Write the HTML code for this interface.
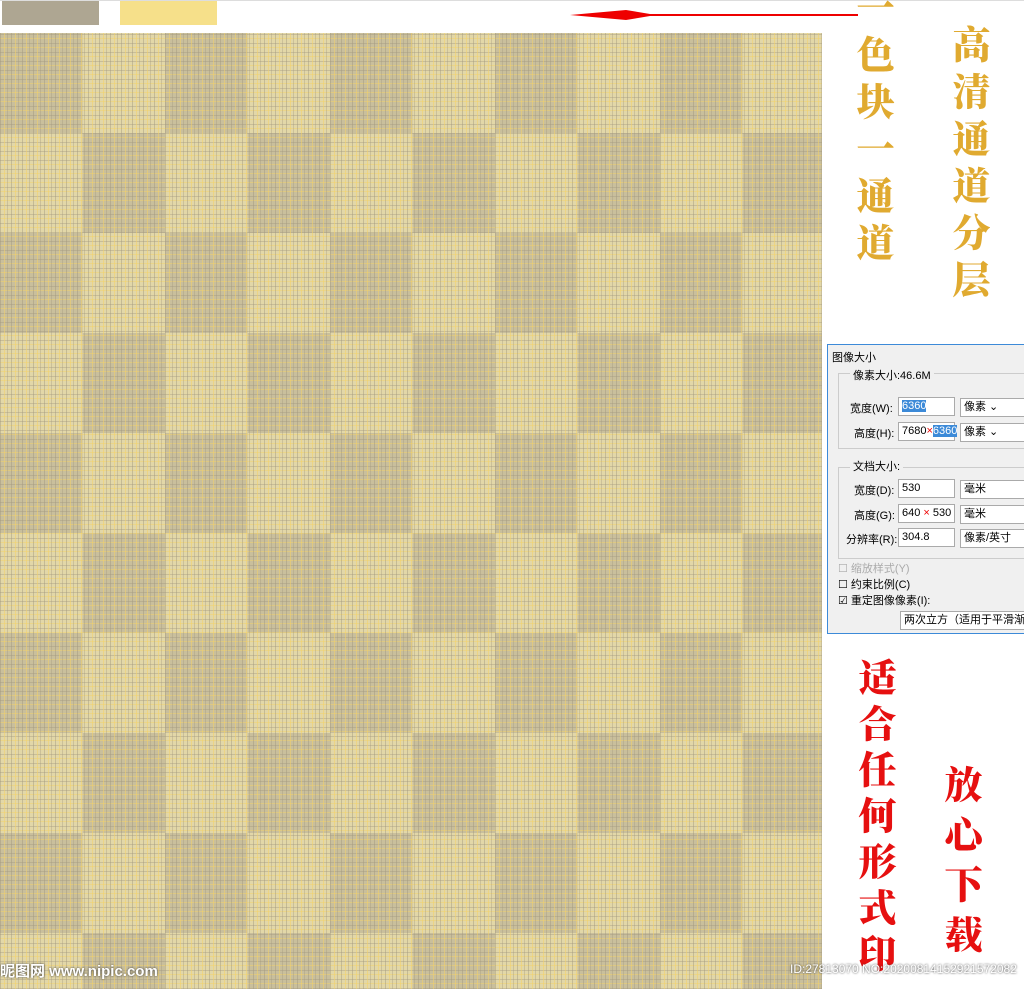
<!DOCTYPE html>
<html><head><meta charset="utf-8"><style>
body{margin:0;width:1024px;height:989px;position:relative;overflow:hidden;background:#fff;font-family:"Liberation Sans","Noto Sans CJK SC",sans-serif}
.pat{position:absolute;left:0;top:33px;width:822px;height:956px;
background:
repeating-linear-gradient(90deg,rgba(160,150,125,.45) 0 1px,transparent 1px 4px,rgba(245,210,100,.5) 4px 5px,transparent 5px 7px,rgba(160,150,125,.35) 7px 8px,transparent 8px 11px),
repeating-linear-gradient(0deg,rgba(160,150,125,.4) 0 1px,transparent 1px 5px,rgba(245,210,100,.45) 5px 6px,transparent 6px 9px),
conic-gradient(#e2d7a8 25%,#c9bf9c 0 50%,#e2d7a8 0 75%,#c9bf9c 0);
background-size:auto,auto,165px 200px}
.v{position:absolute;font-family:"Noto Serif CJK SC",serif;font-weight:900;writing-mode:vertical-rl;line-height:1}
.dlg{position:absolute;left:827px;top:344px;width:197px;height:288px;background:#f0f0f0;border:1px solid #3c8ad8;border-right:none;font-size:11px;color:#000}
.dlg div{position:absolute;white-space:nowrap}
.box{border:1px solid #aaa;background:#fff;height:17px;line-height:17px;padding-left:3px}
</style></head><body>
<div style="position:absolute;left:2px;top:0;width:97px;height:25px;background:#aea692"></div>
<div style="position:absolute;left:120px;top:0;width:97px;height:25px;background:#f6e08a"></div>
<div style="position:absolute;left:0;top:0;width:1024px;height:1px;background:#ddd"></div>
<div style="position:absolute;left:590px;top:14px;width:268px;height:2px;background:#e00"></div>
<svg style="position:absolute;left:566px;top:6px" width="100" height="20"><path d="M4 9 L90 9 L60 4 Z M4 9 L90 9 L60 14Z" fill="#e00"/></svg>
<div class="pat"></div>
<div class="v" style="left:856px;top:-12px;font-size:38px;color:#e0aa30;letter-spacing:9px">一色块一通道</div>
<div class="v" style="left:952px;top:25px;font-size:38px;color:#e0aa30;letter-spacing:9px">高清通道分层</div>
<div class="v" style="left:858px;top:658px;font-size:38px;color:#e61010;letter-spacing:8px">适合任何形式印</div>
<div class="v" style="left:944px;top:765px;font-size:38px;color:#e61010;letter-spacing:12px">放心下载</div>
<div class="dlg">
<div style="left:4px;top:4px">图像大小</div>
<div style="left:10px;top:28px;width:190px;height:74px;border:1px solid #ccc"></div>
<div style="left:22px;top:22px;background:#f0f0f0;padding:0 3px">像素大小:46.6M</div>
<div style="left:22px;top:55px">宽度(W):</div><div class="box" style="left:70px;top:52px;width:52px;"><span style="background:#3c8ad8;color:#fff">6360</span></div><div class="box" style="left:132px;top:53px;width:60px">像素 ⌄</div>
<div style="left:26px;top:80px">高度(H):</div><div class="box" style="left:70px;top:77px;width:52px">7680<span style="color:#e00">×</span><span style="background:#3c8ad8;color:#fff">6360</span></div><div class="box" style="left:132px;top:78px;width:60px">像素 ⌄</div>
<div style="left:10px;top:122px;width:190px;height:90px;border:1px solid #ccc"></div>
<div style="left:22px;top:113px;background:#f0f0f0;padding:0 3px">文档大小:</div>
<div style="left:26px;top:137px">宽度(D):</div><div class="box" style="left:70px;top:134px;width:52px">530</div><div class="box" style="left:132px;top:135px;width:60px">毫米</div>
<div style="left:26px;top:162px">高度(G):</div><div class="box" style="left:70px;top:159px;width:52px">640 <span style="color:#e00">×</span> 530</div><div class="box" style="left:132px;top:160px;width:60px">毫米</div>
<div style="left:18px;top:186px">分辨率(R):</div><div class="box" style="left:70px;top:183px;width:52px">304.8</div><div class="box" style="left:132px;top:184px;width:60px">像素/英寸</div>
<div style="left:10px;top:215px;color:#aaa">☐ 缩放样式(Y)</div>
<div style="left:10px;top:231px">☐ 约束比例(C)</div>
<div style="left:10px;top:247px">☑ 重定图像像素(I):</div>
<div class="box" style="left:72px;top:266px;width:130px">两次立方（适用于平滑渐变</div>
</div>
<div style="position:absolute;left:0;top:960px;font-size:15px;color:#fff;font-weight:bold;text-shadow:0 0 2px #333">昵图网 www.nipic.com</div>
<div style="position:absolute;left:790px;top:962px;font-size:12px;color:#fff;text-shadow:0 0 2px #333">ID:27813070 NO:20200814152921572082</div>
</body></html>
